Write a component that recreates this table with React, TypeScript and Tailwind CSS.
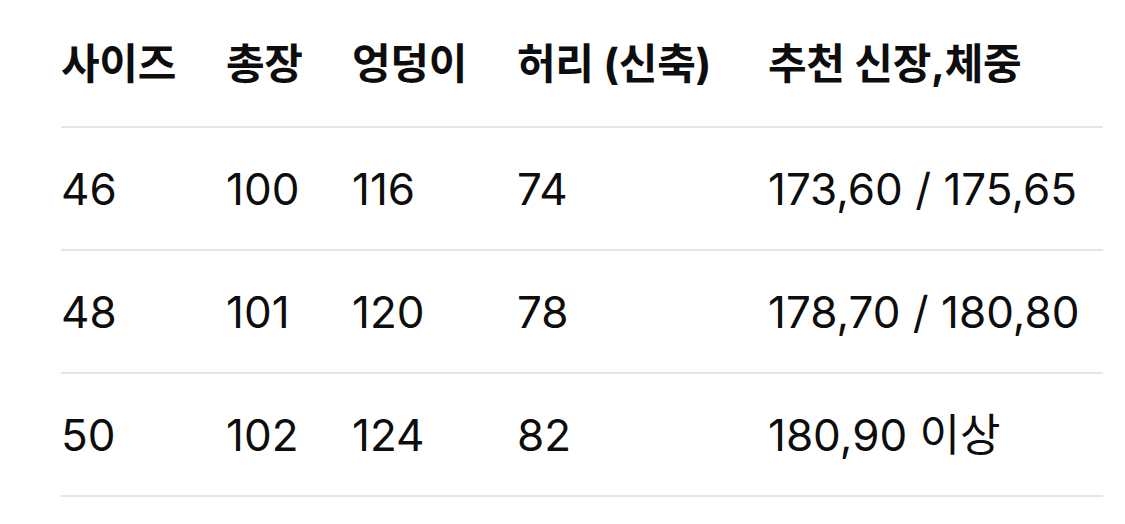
const headers = ["사이즈", "총장", "엉덩이", "허리 (신축)", "추천 신장,체중"];

const rows = [
  ["46", "100", "116", "74", "173,60 / 175,65"],
  ["48", "101", "120", "78", "178,70 / 180,80"],
  ["50", "102", "124", "82", "180,90 이상"],
];

const colWidths = ["w-[165px]", "w-[126px]", "w-[165px]", "w-[251px]", "w-[335px]"];

export default function App() {
  return (
    <div className="w-[1125px] h-[524px] bg-white pl-[61px] pr-[22px] font-['Inter','Noto_Sans_CJK_KR',sans-serif] text-[#0d0d0d]">
      <table className="w-[1042px] border-collapse table-fixed">
        <thead>
          <tr className="h-[127px] border-b-2 border-[#e6e6e6]">
            {headers.map((h, i) => (
              <th key={h} className={`${colWidths[i]} p-0 text-left align-middle text-[42px] font-bold tracking-[-0.3px]`}>
                {h}
              </th>
            ))}
          </tr>
        </thead>
        <tbody>
          {rows.map((r) => (
            <tr key={r[0]} className="h-[123px] border-b-2 border-[#e6e6e6]">
              {r.map((c, i) => (
                <td key={i} className="p-0 text-left align-middle text-[44px] font-normal">
                  {c}
                </td>
              ))}
            </tr>
          ))}
        </tbody>
      </table>
    </div>
  );
}
